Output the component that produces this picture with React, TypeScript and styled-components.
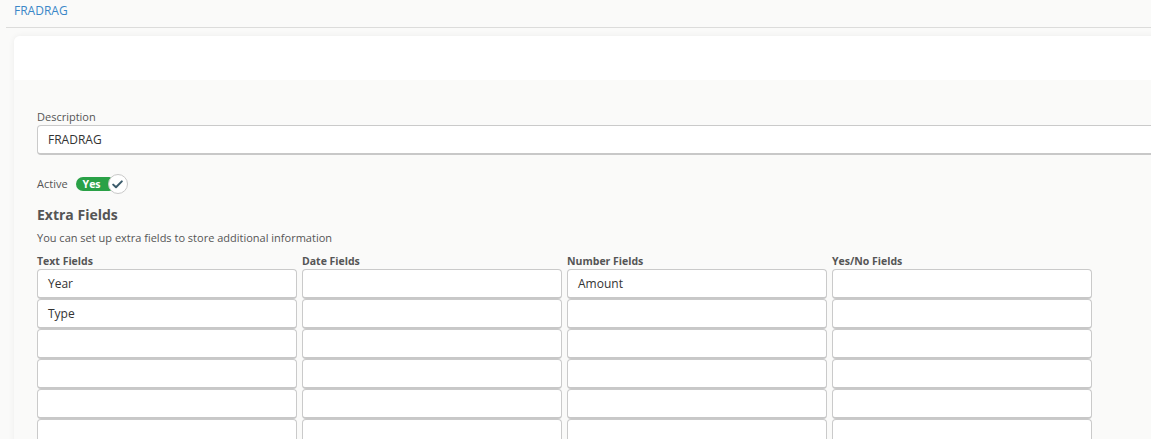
import React from 'react';
import styled, { createGlobalStyle } from 'styled-components';

const GlobalStyle = createGlobalStyle`
  html, body {
    margin: 0;
    padding: 0;
    background: #fafaf9;
    font-family: "Open Sans", Lato, "Liberation Sans", sans-serif;
    color: #555;
    overflow: hidden;
  }
`;

const Page = styled.div`
  width: 1151px;
  height: 439px;
  overflow: hidden;
`;

const TopBar = styled.div`
  height: 27px;
  margin-left: 6px;
  padding-left: 8px;
  border-bottom: 1px solid #dcdcdb;
  display: flex;
  align-items: center;
`;

const Crumb = styled.a`
  color: #3a87c8;
  font-size: 12px;
  text-decoration: none;
  margin-top: -6px;
`;

const Card = styled.div`
  margin: 8px -40px 0 14px;
  border-radius: 6px 0 0 0;
  background: #fafaf9;
  box-shadow: 0 0 6px rgba(0, 0, 0, 0.06);
`;

const CardHead = styled.div`
  height: 44px;
  background: #fff;
  border-radius: 6px 0 0 0;
`;

const CardBody = styled.div`
  padding: 29px 23px 0 23px;
  display: flex;
  flex-direction: column;
`;

const Label = styled.label`
  display: block;
  font-size: 11px;
  color: #555;
  line-height: 15px;
  margin-bottom: 1px;
`;

const Input = styled.div`
  box-sizing: border-box;
  width: 100%;
  height: 30px;
  background: #fff;
  border: 1px solid #cacaca;
  border-bottom: 2px solid #c8c8c8;
  border-radius: 4px;
  padding: 0 10px;
  display: flex;
  align-items: center;
  font-size: 12px;
  color: #333;
`;

const ActiveRow = styled.div`
  display: flex;
  align-items: center;
  gap: 8px;
  margin-top: 19px;
`;

const ActiveLabel = styled.span`
  font-size: 11px;
  color: #555;
  margin-top: -2px;
`;

const Toggle = styled.div`
  display: flex;
  align-items: center;
  position: relative;
  width: 52px;
  height: 20px;
`;

const Pill = styled.div`
  width: 40px;
  height: 14px;
  border-radius: 7px;
  background: #2aa147;
  color: #fff;
  font-size: 10.5px;
  font-weight: 700;
  display: flex;
  align-items: center;
  padding-left: 7px;
  box-sizing: border-box;
`;

const Knob = styled.div`
  position: absolute;
  left: 32px;
  top: 0;
  box-sizing: border-box;
  width: 20px;
  height: 20px;
  border-radius: 50%;
  background: #fff;
  border: 1px solid #c9c9c9;
  display: flex;
  align-items: center;
  justify-content: center;
`;

const Heading = styled.h3`
  margin: 11px 0 0 0;
  font-size: 14px;
  font-weight: 700;
  color: #555;
  line-height: 20px;
`;

const Sub = styled.p`
  margin: 6px 0 0 0;
  font-size: 11px;
  color: #555;
  line-height: 14px;
`;

const Grid = styled.div`
  display: grid;
  grid-template-columns: repeat(4, 260px);
  column-gap: 5px;
  margin-top: 10px;
`;

const Column = styled.div`
  display: flex;
  flex-direction: column;
`;

const ColLabel = styled.div`
  font-size: 10.5px;
  font-weight: 700;
  color: #555;
  line-height: 12px;
  margin-bottom: 2px;
`;

const columns: { title: string; values: string[] }[] = [
  { title: 'Text Fields', values: ['Year', 'Type', '', '', '', ''] },
  { title: 'Date Fields', values: ['', '', '', '', '', ''] },
  { title: 'Number Fields', values: ['Amount', '', '', '', '', ''] },
  { title: 'Yes/No Fields', values: ['', '', '', '', '', ''] },
];

export default function App() {
  return (
    <Page>
      <GlobalStyle />
      <TopBar>
        <Crumb href="#">FRADRAG</Crumb>
      </TopBar>
      <Card>
        <CardHead />
        <CardBody>
          <Label>Description</Label>
          <Input>FRADRAG</Input>
          <ActiveRow>
            <ActiveLabel>Active</ActiveLabel>
            <Toggle>
              <Pill>Yes</Pill>
              <Knob>
                <svg width="11" height="9" viewBox="0 0 11 9">
                  <path d="M1.2 4.6 L4 7.3 L9.8 1.4" fill="none" stroke="#3b5b6b" strokeWidth="2" strokeLinecap="round" strokeLinejoin="round" />
                </svg>
              </Knob>
            </Toggle>
          </ActiveRow>
          <Heading>Extra Fields</Heading>
          <Sub>You can set up extra fields to store additional information</Sub>
          <Grid>
            {columns.map((c) => (
              <Column key={c.title}>
                <ColLabel>{c.title}</ColLabel>
                {c.values.map((v, i) => (
                  <Input key={i}>{v}</Input>
                ))}
              </Column>
            ))}
          </Grid>
        </CardBody>
      </Card>
    </Page>
  );
}
